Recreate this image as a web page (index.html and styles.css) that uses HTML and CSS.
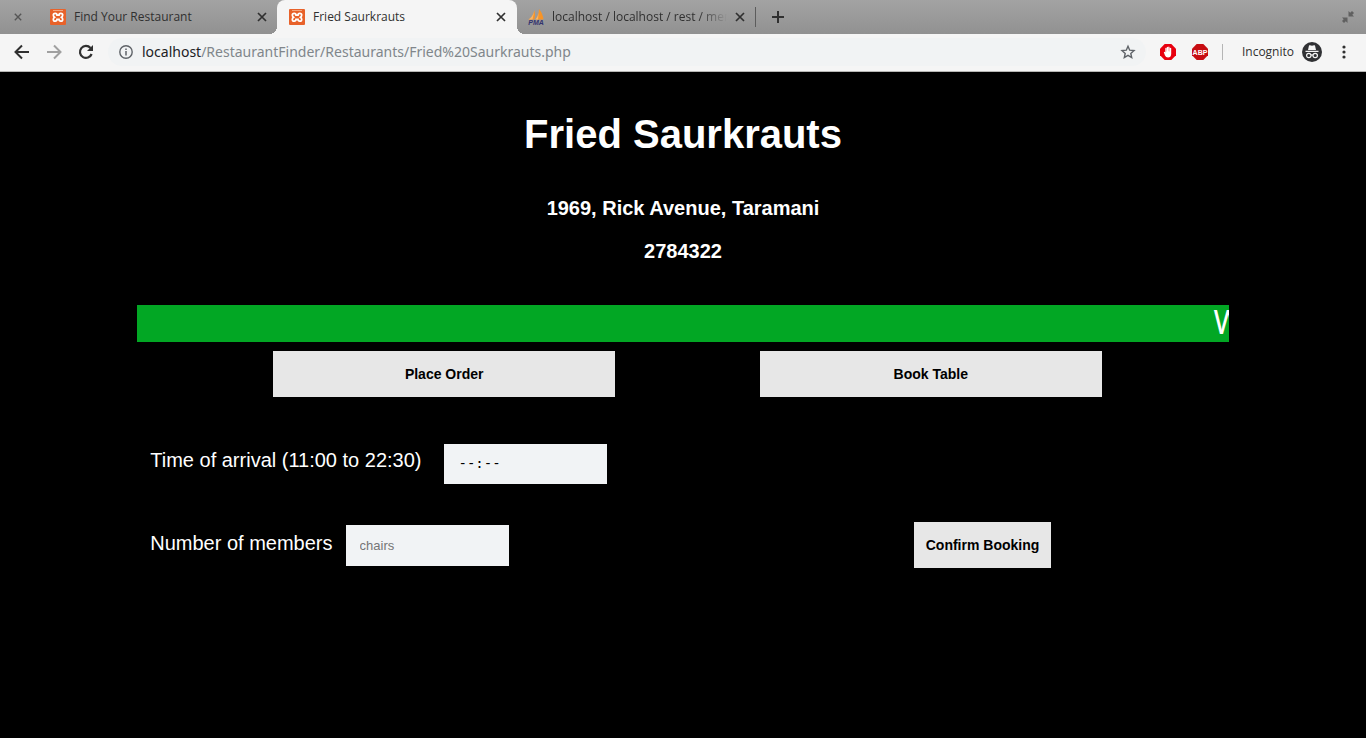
FILE: index.html
```html
<!DOCTYPE html>
<html lang="en">
<head>
<meta charset="utf-8">
<title>Fried Saurkrauts</title>
<link rel="stylesheet" href="styles.css">
</head>
<body>
<svg class="defs" aria-hidden="true">
  <symbol id="xampp" viewBox="0 0 16 16">
    <rect width="16" height="16" rx="1" fill="#e8622a"/>
    <path d="M5.200 4.300Q3.300 4.300 3.300 6Q3.300 7.500 4.500 8.200Q3.300 9 3.300 10.500Q3.300 12.200 5.200 12.200Q7 12.200 7 10.300H9Q9 12.200 10.800 12.200Q12.700 12.200 12.700 10.500Q12.700 9 11.500 8.200Q12.700 7.500 12.700 6Q12.700 4.300 10.800 4.300Q9 4.300 9 6.200H7Q7 4.300 5.200 4.300Z" fill="none" stroke="#fff" stroke-width="1.700"/>
    <path d="M3 1.500h10" stroke="#f6b797" stroke-width=".8"/>
  </symbol>
  <symbol id="cross" viewBox="0 0 10 10">
    <path d="M1 1l8 8M9 1L1 9" fill="none" stroke="currentColor" stroke-width="1.700"/>
  </symbol>
</svg>

<header class="browser">
  <div class="tabstrip">
    <button class="icon-btn window-close" aria-label="Close window"><svg width="8" height="8"><use href="#cross"/></svg></button>
    <div class="tab">
      <svg width="16" height="16"><use href="#xampp"/></svg>
      <span class="tab-title">Find Your Restaurant</span>
      <button class="icon-btn" aria-label="Close tab"><svg width="10" height="10"><use href="#cross"/></svg></button>
    </div>
    <div class="tab tab-active">
      <svg width="16" height="16"><use href="#xampp"/></svg>
      <span class="tab-title">Fried Saurkrauts</span>
      <button class="icon-btn" aria-label="Close tab"><svg width="10" height="10"><use href="#cross"/></svg></button>
    </div>
    <div class="tab tab-last">
      <svg width="16" height="16" viewBox="0 0 16 16">
        <path d="M.5 10.500Q5 8 6.500 1Q7.500 6 6.500 10.500ZM7.500 10.500Q11 6 11 0Q15 5 15.500 10.500Z" fill="#f79427"/>
        <path d="M.5 10.500Q5 8 6.500 1L4.500 10.500ZM7.500 10.500Q11 6 11 0L10 10.500Z" fill="#f8b568"/>
        <text class="pma" x="8" y="16" text-anchor="middle">PMA</text>
      </svg>
      <span class="tab-title tab-fade">localhost / localhost / rest / menu</span>
      <button class="icon-btn" aria-label="Close tab"><svg width="10" height="10"><use href="#cross"/></svg></button>
    </div>
    <span class="tab-divider"></span>
    <button class="icon-btn new-tab" aria-label="New tab"><svg width="12" height="12" viewBox="0 0 12 12"><path d="M6 0v12M0 6h12" stroke="currentColor" stroke-width="2"/></svg></button>
    <button class="icon-btn restore" aria-label="Restore window">
      <svg width="12" height="12" viewBox="0 0 12 12"><path d="M6.500 0v5.500H12L10.300 3.800L12 2L10 0L8.200 1.700ZM5.500 12V6.500H0L1.700 8.200L0 10L2 12L3.800 10.300Z" fill="currentColor"/></svg>
    </button>
  </div>

  <div class="toolbar">
    <nav class="nav">
      <button class="icon-btn" aria-label="Back"><svg width="16" height="16" viewBox="0 0 16 16"><path d="M15 8H2M8 1.500L1.500 8L8 14.500" fill="none" stroke="currentColor" stroke-width="2"/></svg></button>
      <button class="icon-btn muted" aria-label="Forward"><svg width="16" height="16" viewBox="0 0 16 16"><path d="M1 8H14M8 1.500L14.500 8L8 14.500" fill="none" stroke="currentColor" stroke-width="2"/></svg></button>
      <button class="icon-btn" aria-label="Reload"><svg width="16" height="16" viewBox="0 0 16 16"><path d="M13.600 10A6 6 0 1 1 12.500 4" fill="none" stroke="currentColor" stroke-width="2.200"/><path d="M15 1v6H9Z" fill="currentColor"/></svg></button>
    </nav>
    <div class="omnibox">
      <svg width="14" height="14" viewBox="0 0 14 14"><circle cx="7" cy="7" r="6.200" fill="none" stroke="#5f6368" stroke-width="1.400"/><path d="M7 6v4.500M7 3.500v1.500" stroke="#5f6368" stroke-width="1.500"/></svg>
      <span class="url"><span class="url-host">localhost</span>/RestaurantFinder/Restaurants/Fried%20Saurkrauts.php</span>
      <button class="icon-btn star" aria-label="Bookmark this page"><svg width="16" height="16" viewBox="0 0 16 16"><path d="M8 2.200L9.700 6.200L14 6.600L10.800 9.400L11.700 13.600L8 11.400L4.300 13.600L5.200 9.400L2 6.600L6.300 6.200Z" fill="none" stroke="currentColor" stroke-width="1.400"/></svg></button>
    </div>
    <div class="extensions">
      <svg width="16" height="16" viewBox="0 0 16 16"><path d="M4.700 0h6.600L16 4.700v6.600L11.300 16H4.700L0 11.300V4.700Z" fill="#e8000f"/><path d="M3.800 8.200Q4.500 7.400 5.300 8.500V4.200Q5.900 3.400 6.500 4.200V7.500H6.700V3.200Q7.300 2.300 8 3.200V7.300H8.200V3Q8.900 2.200 9.500 3V7.500H9.700V4.200Q10.400 3.400 11.200 4.200V10Q11 13.500 8 13.500Q5.800 13.500 5 11.500Z" fill="#fff"/></svg>
      <svg width="16" height="16" viewBox="0 0 16 16"><path d="M4.700 0h6.600L16 4.700v6.600L11.300 16H4.700L0 11.300V4.700Z" fill="#c70d12"/><text class="abp" x="8" y="11" text-anchor="middle">ABP</text></svg>
      <span class="divider"></span>
    </div>
    <div class="profile">
      <span>Incognito</span>
      <svg width="20" height="20" viewBox="0 0 20 20"><circle cx="10" cy="10" r="10" fill="#303134"/><path d="M6 8L7 3.500Q7.200 3 8 3.200L10 3.700L12 3.200Q12.800 3 13 3.500L14 8ZM3.500 8.700h13v1.300h-13Z" fill="#f5f5f5"/><g fill="none" stroke="#f5f5f5" stroke-width="1.200"><circle cx="6.800" cy="13.500" r="2.200"/><circle cx="13.200" cy="13.500" r="2.200"/><path d="M9 13.300q1-.7 2 0"/></g></svg>
    </div>
    <button class="icon-btn menu" aria-label="Menu"><svg width="4" height="14" viewBox="0 0 4 14"><g fill="currentColor"><circle cx="2" cy="2" r="1.600"/><circle cx="2" cy="7" r="1.600"/><circle cx="2" cy="12" r="1.600"/></g></svg></button>
  </div>
</header>

<main class="page">
  <h1 class="name">Fried Saurkrauts</h1>
  <h3 class="detail">1969, Rick Avenue, Taramani</h3>
  <h3 class="detail">2784322</h3>
  <div class="ticker"><span class="ticker-text">W</span></div>
  <div class="actions">
    <button class="btn">Place Order</button>
    <button class="btn">Book Table</button>
  </div>
  <form class="booking">
    <div class="row">
      <label for="arrival">Time of arrival (11:00 to 22:30)</label>
      <input class="field field-time" id="arrival" type="text" value="--:--">
    </div>
    <div class="row row-members">
      <label for="members">Number of members</label>
      <input class="field" id="members" type="text" placeholder="chairs">
      <button class="btn btn-confirm" type="button">Confirm Booking</button>
    </div>
  </form>
</main>
</body>
</html>
```

FILE: styles.css
```css
* {
  box-sizing: border-box;
}

body {
  margin: 0;
  min-height: 100vh;
  background: #000;
  color: #fff;
  font-family: "Liberation Sans", Arial, sans-serif;
}

.defs {
  position: absolute;
  width: 0;
  height: 0;
}

svg {
  display: block;
  flex: none;
}

.browser {
  font-family: "Open Sans", "Noto Sans", sans-serif;
  font-size: 12px;
  line-height: 16px;
  color: #303030;
  border-bottom: 1px solid #b6b6b4;
}

.icon-btn {
  display: flex;
  padding: 0;
  border: 0;
  background: none;
  color: inherit;
}

.tabstrip {
  display: flex;
  align-items: center;
  height: 34px;
  background: linear-gradient(#a3a3a3, #919191);
}

.window-close {
  width: 38px;
  padding-left: 14px;
  color: #555;
}

.tab {
  display: flex;
  align-items: center;
  gap: 8px;
  width: 239px;
  height: 34px;
  padding: 0 10px 0 12px;
}

.tab-active {
  position: relative;
  width: 240px;
  padding-right: 11px;
  background: #f5f5f5;
  border-radius: 8px 8px 0 0;
}

.tab-last {
  padding-left: 11px;
  padding-right: 11px;
}

.tab-active::before,
.tab-active::after {
  content: "";
  position: absolute;
  bottom: 0;
  width: 8px;
  height: 8px;
}

.tab-active::before {
  right: 100%;
  background: radial-gradient(circle at 0 0, transparent 8px, #f5f5f5 8px);
}

.tab-active::after {
  left: 100%;
  background: radial-gradient(circle at 100% 0, transparent 8px, #f5f5f5 8px);
}

.tab-title {
  flex: 1;
  min-width: 0;
  overflow: hidden;
  white-space: nowrap;
}

.tab-fade {
  mask-image: linear-gradient(to right, #000 84%, transparent);
}

.pma {
  font: italic bold 7px "Liberation Sans", sans-serif;
  fill: #32326e;
}

.tab-divider {
  width: 1px;
  height: 20px;
  margin-left: -1px;
  background: #5c5c5c;
}

.new-tab {
  margin-left: 16px;
}

.restore {
  margin-left: auto;
  margin-right: 12px;
  color: #606060;
}

.toolbar {
  display: flex;
  align-items: center;
  height: 37px;
  padding-bottom: 1px;
  background: #f5f5f5;
}

.nav {
  display: flex;
  gap: 16px;
  padding: 0 14px;
}

.muted {
  color: #a0a0a0;
}

.omnibox {
  display: flex;
  align-items: center;
  flex: 1;
  gap: 9px;
  height: 28px;
  padding: 0 10px 0 11px;
  border-radius: 14px;
  background: #f1f3f4;
}

.url {
  flex: 1;
  font-family: "Noto Sans", sans-serif;
  font-size: 14px;
  line-height: 20px;
  color: #80868b;
}

.url-host {
  color: #202124;
}

.star {
  color: #5f6368;
}

.extensions {
  display: flex;
  align-items: center;
  gap: 16px;
  padding-left: 14px;
}

.abp {
  font: bold 7px "Liberation Sans", sans-serif;
  fill: #fff;
}

.divider {
  width: 1px;
  height: 16px;
  margin-left: -2px;
  background: #b5b5b5;
}

.profile {
  display: flex;
  align-items: center;
  gap: 8px;
  padding-left: 19px;
}

.menu {
  padding: 0 20px;
}

.page {
  padding-top: 39px;
}

.name {
  margin: 0 0 40px;
  font-size: 40px;
  line-height: 46px;
  text-align: center;
}

.detail {
  margin: 0 0 20px;
  font-size: 20px;
  line-height: 23px;
  text-align: center;
}

.ticker {
  display: flex;
  justify-content: flex-end;
  width: 80%;
  height: 37px;
  margin: 42px auto 9px;
  overflow: hidden;
  background: #02a724;
}

.ticker-text {
  width: 16px;
  font-family: "Noto Sans", sans-serif;
  font-size: 32px;
  line-height: 34px;
}

.actions {
  display: flex;
  justify-content: space-between;
  margin-left: 20%;
  width: calc(60% + 9px);
}

.btn {
  width: 342px;
  height: 46px;
  padding: 0;
  border: 0;
  background: #e7e7e7;
  color: #000;
  font: bold 14px "Liberation Sans", Arial, sans-serif;
}

.booking {
  padding: 47px 0 0 11%;
  font-size: 20px;
}

.row {
  display: flex;
  align-items: center;
  gap: 23px;
  height: 40px;
}

.row label {
  padding-bottom: 8px;
}

.row-members {
  gap: 13px;
  height: 46px;
  margin-top: 38px;
}

.row-members label {
  padding-bottom: 4px;
}

.field {
  width: 163px;
  height: 41px;
  padding: 0 14px;
  border: 0;
  border-radius: 0;
  background: #f1f3f5;
  color: #000;
  font: 13px "Liberation Sans", Arial, sans-serif;
}

.field-time {
  height: 40px;
  padding-bottom: 2px;
  font-family: "DejaVu Sans Mono", monospace;
  font-size: 14px;
}

.field::placeholder {
  color: #757575;
}

.btn-confirm {
  width: 137px;
  margin-left: auto;
  margin-right: 315px;
}
```
